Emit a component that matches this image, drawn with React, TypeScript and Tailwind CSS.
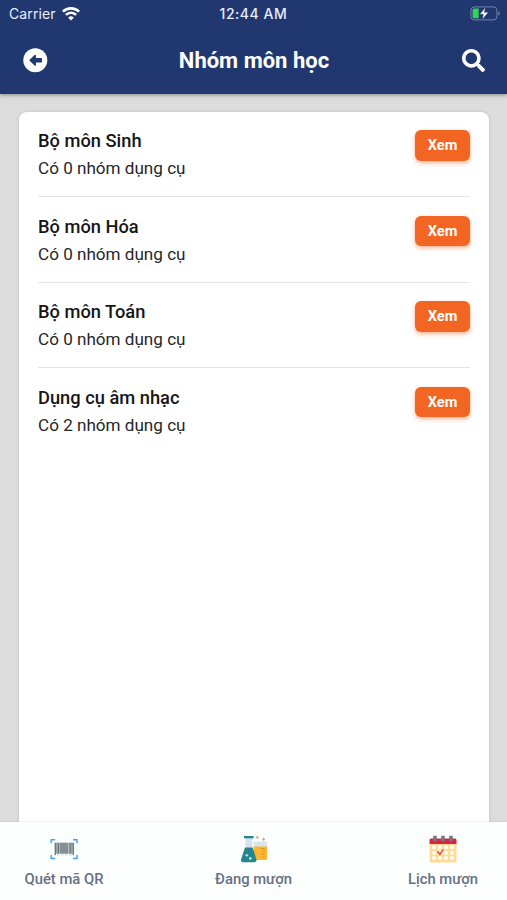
import { FaSearch } from "react-icons/fa";

const groups = [
  { name: "Bộ môn Sinh", count: 0 },
  { name: "Bộ môn Hóa", count: 0 },
  { name: "Bộ môn Toán", count: 0 },
  { name: "Dụng cụ âm nhạc", count: 2 },
];

function BackIcon() {
  return (
    <svg width="25" height="25" viewBox="0 0 25 25">
      <circle cx="12.3" cy="12.3" r="12" fill="white" />
      <path d="M7 12.300 12.300 7.300v3.400h6v3.200h-6v3.400Z" fill="#20386f" stroke="#20386f" strokeWidth="1.200" strokeLinejoin="round" />
    </svg>
  );
}

function WifiIcon() {
  return (
    <svg width="18" height="14" viewBox="0 0 18 14" fill="none" stroke="white" strokeWidth="2.6">
      <path d="M.9 4.700a11.500 11.500 0 0 1 16.200 0" />
      <path d="M3.900 7.900a7.200 7.200 0 0 1 10.200 0" />
      <path d="M9 13.500 6.200 10.700a4 4 0 0 1 5.600 0Z" fill="white" stroke="none" />
    </svg>
  );
}

function BatteryIcon() {
  return (
    <svg width="30" height="15" viewBox="0 0 30 15" fill="none">
      <rect x=".9" y=".9" width="26" height="13" rx="3.4" stroke="#7283ad" strokeWidth="1" />
      <path d="M28.300 5.200c2 .8 2 3.600 0 4.400Z" fill="#7283ad" />
      <path d="M4.200 2.500h4.500v9.800H4.200a1.600 1.600 0 0 1-1.600-1.600V4.100a1.600 1.600 0 0 1 1.600-1.600Z" fill="#35d05a" />
      <path d="M15.500 1.300 9.800 8.300h3.600L12.300 13.600l6-7.300h-4Z" fill="white" stroke="#20386f" strokeWidth=".4" />
    </svg>
  );
}

function BarcodeIcon() {
  return (
    <svg width="28" height="28" viewBox="0 0 28 28" fill="none">
      <path d="M1.200 8.300V4.700h4M23 4.700h4v3.600M27 20v3.600h-4M5.200 23.600h-4V20" stroke="#42a5f5" strokeWidth="1.500" />
      <path d="M5 7.700h18.500v11H5Z" fill="#b9c1c3" />
      <path d="M5.300 7.700v12.600M8.400 7.700v11M11 7.700v11M14 7.700v11M17 7.700v11M20 7.700v11M23.300 7.700v12.600" stroke="#66757a" strokeWidth="1.300" />
      <path d="M6.900 7.700v11M12.500 7.700v11M15.500 7.700v11M21.700 7.700v11" stroke="#7d898c" strokeWidth=".8" />
      <path d="M7 20h3M11.500 20h2M15 20h2.500M19 20h3" stroke="#c8d0d2" strokeWidth=".8" />
    </svg>
  );
}

function FlaskIcon() {
  return (
    <svg width="28" height="28" viewBox="0 0 28 28" fill="none">
      <path d="M13.500 6.500h13.800V12H13.500Z" fill="#d8e5ee" />
      <path d="M13.500 11.500h13.600v11.900a1.600 1.600 0 0 1-1.600 1.600h-12Z" fill="#fdb62f" />
      <path d="M21.500 13.500h3.200M22.700 16.300h2M21.500 19h3.200M22.700 22h2" stroke="#d98b20" strokeWidth="1" />
      <path d="M5.500 3h6.800v10H5.500Z" fill="#d3e2ec" />
      <path d="M5 12.500h7.600L16.300 24c.6 2-.4 3.200-2.100 3.200h-11C1.500 27.200.6 26 1.200 24Z" fill="#24858c" />
      <path d="M4 1h9.600v2.300H4Z" fill="#24858c" />
      <circle cx="6.800" cy="20.300" r="1.300" fill="#b9dce2" />
      <circle cx="10.300" cy="23.500" r="1.400" fill="#b9dce2" />
      <path d="M17.300.8v3M15.800 2.300h3M23.500 2.800v3M22 4.300h3" stroke="#f6a475" strokeWidth="1.200" />
    </svg>
  );
}

function CalendarIcon() {
  return (
    <svg width="28" height="28" viewBox="0 0 28 28" fill="none">
      <path d="M.5 8h27v17.500a2 2 0 0 1-2 2h-23a2 2 0 0 1-2-2Z" fill="#ffdc91" />
      <path d="M.5 5A1.500 1.500 0 0 1 2 3.500h24A1.500 1.500 0 0 1 27.500 5v4H.5Z" fill="#dc2240" />
      {[6, 14, 22].map((x) => (
        <path key={x} d={`M${x} .800v5.600`} stroke="#727782" strokeWidth="3.600" />
      ))}
      {[12.3, 17.7, 23].map((y) =>
        [5, 11, 17, 23].map((x) => (
          <circle key={`${x}-${y}`} cx={x} cy={y} r="2" fill="white" />
        ))
      )}
      <circle cx="11.200" cy="17.500" r="3" fill="#fff4db" />
      <path d="m8.300 16.400 2.600 3 3.300-5" stroke="#e5533d" strokeWidth="1.700" />
    </svg>
  );
}

const tabs = [
  { label: "Quét mã QR", Icon: BarcodeIcon },
  { label: "Đang mượn", Icon: FlaskIcon },
  { label: "Lịch mượn", Icon: CalendarIcon },
];

export default function App() {
  return (
    <div className="flex h-[900px] w-[507px] flex-col overflow-hidden bg-[#dcdcdc] font-['Roboto',sans-serif] text-[#161616]">
      <header className="z-10 h-[93.5px] shrink-0 bg-[#20386f] text-white shadow-[0_1px_4px_rgba(0,0,0,0.4)]">
        <div className="grid h-[27px] grid-cols-3 items-center pl-[9px] pr-[7px] font-['Inter',sans-serif] text-[#e8edf8]">
          <div className="flex items-center">
            <span className="mr-1.5 text-[14px] tracking-[0.1px]">Carrier</span>
            <WifiIcon />
          </div>
          <span className="-ml-0.5 whitespace-nowrap text-center text-[14px] font-medium tracking-[0.55px]">12:44 AM</span>
          <div className="flex justify-end">
            <BatteryIcon />
          </div>
        </div>
        <div className="flex h-[66px] items-center justify-between pl-[23px] pr-[22px]">
          <BackIcon />
          <h1 className="-ml-0.5 text-[22px] font-bold">Nhóm môn học</h1>
          <FaSearch size={23} />
        </div>
      </header>

      <main className="flex min-h-0 flex-1 flex-col pl-[19px] pr-[18px] pt-[18px]">
        <section className="flex-1 rounded-t-lg bg-white pl-[19px] pr-[19px] shadow-[0_0_3px_rgba(0,0,0,0.15)]">
          {groups.map(({ name, count }) => (
            <article
              key={name}
              className="flex h-[85.5px] items-start justify-between border-b border-[#e3e3e3] pt-[15.8px] last:border-b-0"
            >
              <div>
                <h2 className="text-[18.3px] font-medium leading-[27px]">{name}</h2>
                <p className="pt-px text-[17.1px] leading-[27px] text-[#262626]">Có {count} nhóm dụng cụ</p>
              </div>
              <button className="mt-[3px] h-[30.5px] w-[55px] rounded-[6px] bg-[#f26522] pt-px text-[14.6px] font-bold text-white shadow-[0_2px_4px_rgba(242,101,34,0.5)]">
                Xem
              </button>
            </article>
          ))}
        </section>
      </main>

      <nav className="z-10 flex h-[78px] shrink-0 justify-between bg-[#fdfefe] px-6 pt-[13px] shadow-[0_0_2px_rgba(0,0,0,0.15)]">
        {tabs.map(({ label, Icon }) => (
          <div key={label} className="flex w-20 flex-col items-center gap-[6px]">
            <Icon />
            <span className="whitespace-nowrap text-[14.8px] font-medium leading-5 text-[#667085]">{label}</span>
          </div>
        ))}
      </nav>
    </div>
  );
}
